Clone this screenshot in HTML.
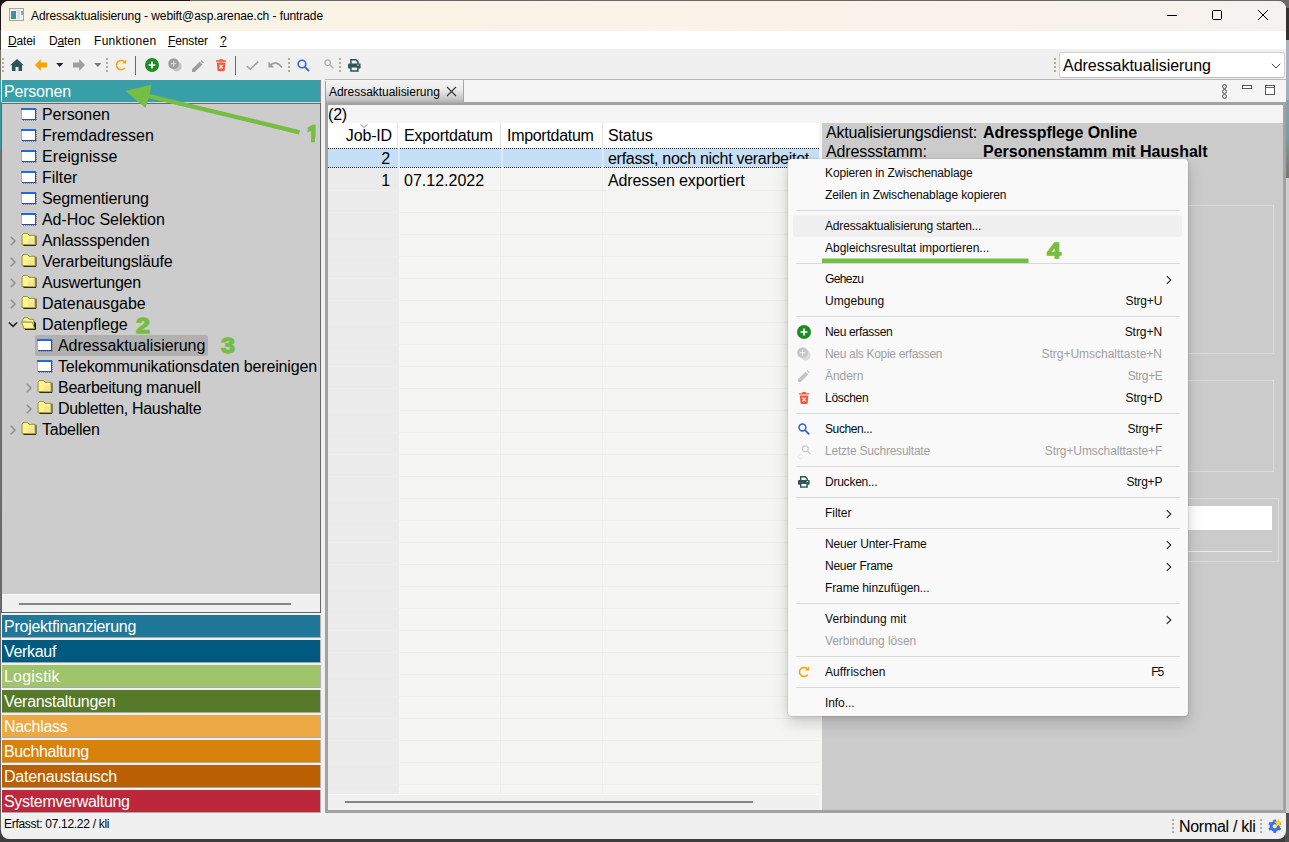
<!DOCTYPE html>
<html lang="de"><head><meta charset="utf-8"><title>Adressaktualisierung - webift@asp.arenae.ch - funtrade</title>
<style>
*{box-sizing:border-box;margin:0;padding:0}
html,body{width:1289px;height:842px;overflow:hidden}
body{background:#3d3d3d;font-family:"Liberation Sans",sans-serif;color:#000;position:relative}
.abs,.win *{position:absolute}
.win u{position:static}
.win{position:absolute;left:1px;top:1px;width:1285px;height:838px;background:#f0f0f0;border-radius:8px;overflow:hidden}
.t12{font-size:12px;letter-spacing:-0.12px;white-space:nowrap;line-height:16px}
.t16{font-size:16px;letter-spacing:-0.2px;white-space:nowrap;line-height:20px}
.tree .t16{left:0}
.row{left:0;width:318px;height:21px}
.ico{width:16px;height:13px}
.cat{left:1px;width:318px;height:22px;color:#fff;font-size:16px;letter-spacing:-0.2px;line-height:24px;padding-left:2px;white-space:nowrap;overflow:hidden}
.gap{left:1px;width:319px;height:1px;background:#a8a8a8}
.mi{left:37px;font-size:12px;letter-spacing:-0.05px;line-height:22px;height:22px;white-space:nowrap;color:#0a0a0a}
.mk{right:17px;font-size:12px;letter-spacing:-0.05px;line-height:22px;height:22px;white-space:nowrap;color:#0a0a0a;text-align:right}
.dis{color:#a0a0a0}
.sep{left:8px;width:384px;height:1px;background:#d9d9d9}
.chev{right:16px;width:6px;height:10px}
.hl{left:2px;width:1px;background:#e4e4e4}
.gl{height:1px;background:#e9e9e9;left:0}
.grip{width:2px;height:14px;background:repeating-linear-gradient(to bottom,#b3ab99 0,#b3ab99 2px,transparent 2px,transparent 4px)}
.green{color:#76bd43;font-weight:700;font-size:22.8px;line-height:24px;letter-spacing:0;-webkit-text-stroke:1.3px #76bd43;transform:scale(1.1,1);transform-origin:0 22px}
</style></head><body>

<div class="abs" style="left:0;top:0;width:190px;height:30px;background:#1c1220"></div>
<div class="abs" style="left:190px;top:0;width:1099px;height:12px;background:#686868"></div>
<div class="abs" style="left:1285px;top:8px;width:4px;height:32px;background:#303030"></div>
<div class="abs" style="left:1285px;top:40px;width:4px;height:60px;background:linear-gradient(#a9b4ba,#9fb0b4)"></div>
<div class="abs" style="left:1285px;top:100px;width:4px;height:78px;background:linear-gradient(#85a3a4,#7c9a9a 50%,#77776f)"></div>
<div class="abs" style="left:1285px;top:178px;width:4px;height:635px;background:#cdcdcd"></div>
<div class="abs" style="left:1285px;top:813px;width:4px;height:29px;background:#505050"></div>
<div class="abs" style="left:0;top:50px;width:3px;height:780px;background:linear-gradient(#77736a 0,#77736a 30px,#3a98a2 30px,#3a98a2 100px,#777 100px,#666 100%)"></div>
<div class="win">
<div style="left:0;top:0;width:1285px;height:30px;background:linear-gradient(90deg,#faf4e4,#f9f3e8 50%,#f8f2ec 88%,#f4f2f0)"></div>
<svg style="left:8px;top:7px" width="16" height="14" viewBox="0 0 16 14"><defs><linearGradient id="ig" x1="0" y1="0" x2="0" y2="1"><stop offset="0" stop-color="#4f86c4"/><stop offset="1" stop-color="#3f9a60"/></linearGradient></defs><rect x="0.5" y="0.5" width="14" height="12" fill="#f1f2f6" stroke="#a6a6a6"/><rect x="2" y="3" width="5" height="8" fill="url(#ig)"/><rect x="8" y="2" width="3" height="9" fill="#dedede"/><rect x="12" y="3" width="2" height="4" fill="#6aa0c8"/><rect x="12" y="5" width="2" height="2" fill="#7fc08a"/></svg>
<div class="t12" style="left:30px;top:7px;letter-spacing:-0.08px">Adressaktualisierung - webift@asp.arenae.ch - funtrade</div>
<svg style="left:1165px;top:7.5px" width="110" height="12" viewBox="0 0 110 12" fill="none" stroke="#000" stroke-width="1"><path d="M1 6.5h10"/><rect x="46.5" y="1.5" width="9" height="9" rx="1"/><path d="M92 1l10 10M102 1l-10 10"/></svg>
<div style="left:0;top:30px;width:1285px;height:18px;background:#fff"></div>
<div class="t12" style="left:7px;top:32px"><u>D</u>atei</div>
<div class="t12" style="left:48px;top:32px">D<u>a</u>ten</div>
<div class="t12" style="left:93px;top:32px"><span style="position:static;letter-spacing:0.3px">Funktionen</span></div>
<div class="t12" style="left:167px;top:32px"><u>F</u>enster</div>
<div class="t12" style="left:219px;top:32px"><u>?</u></div>
<div class="grip" style="left:1px;top:57px"></div>
<div class="grip" style="left:105px;top:57px"></div>
<div class="grip" style="left:287px;top:57px"></div>
<div class="grip" style="left:338px;top:57px"></div>
<div class="grip" style="left:1053px;top:57px"></div>
<svg style="left:9px;top:58px" width="14" height="12" viewBox="0 0 14 12"><path d="M7 0L0.2 6.2h1.7V12h3.6V8h3V12h3.6V6.2h1.7z" fill="#2f5656"/></svg>
<svg style="left:34px;top:58px" width="12" height="12" viewBox="0 0 12 12"><path d="M0 6L5.8 0v3.4H12v5H5.8V12z" fill="#ffa200"/></svg>
<svg style="left:55px;top:62px" width="8" height="4" viewBox="0 0 8 4"><path d="M0.2 0h7.2L3.8 4z" fill="#222"/></svg>
<svg style="left:72px;top:58px" width="12" height="12" viewBox="0 0 12 12"><path d="M12 6L6.2 0v3.4H0v5h6.2V12z" fill="#9e9e9e"/></svg>
<svg style="left:93px;top:62px" width="8" height="4" viewBox="0 0 8 4"><path d="M0.2 0h7.2L3.8 4z" fill="#7a7a7a"/></svg>
<svg style="left:114px;top:58px" width="12" height="12" viewBox="0 0 13 13" fill="none"><path d="M10.6 9.6A5 5 0 1 1 10.9 4" stroke="#ffa000" stroke-width="1.7"/><path d="M12.2 0.6V5H7.8z" fill="#ffa000"/></svg>
<div style="left:134px;top:55px;width:1px;height:19px;background:#6a6a6a"></div>
<svg style="left:144px;top:57px" width="14" height="14" viewBox="0 0 14 14"><circle cx="7" cy="7" r="7" fill="#1f8b24"/><path d="M7 3.6v6.8M3.6 7h6.8" stroke="#fff" stroke-width="1.7"/></svg>
<svg style="left:167px;top:57px" width="14" height="14" viewBox="0 0 14 14"><circle cx="8.6" cy="8.4" r="5" fill="#c4c4c4"/><circle cx="5.6" cy="5.6" r="5.4" fill="#9e9e9e"/><path d="M5.6 2.8v5.6M2.8 5.6h5.6" stroke="#d8d8d8" stroke-width="1.2"/></svg>
<svg style="left:191px;top:58.5px" width="12" height="12" viewBox="0 0 13 13"><path d="M0 13v-3L8.2 1.8l3 3L3 13zM9.2 0.8l1-1 3 3-1 1z" fill="#9e9e9e"/></svg>
<svg style="left:215px;top:58px" width="10.2" height="12.5" viewBox="0 0 11 13"><path d="M0 1.2h3.2L3.8 0h3.4l0.6 1.2H11v1.5H0zM0.9 3.6h9.2L9.4 11.6Q9.3 13 8 13H3Q1.7 13 1.6 11.6z" fill="#f9573a"/><path d="M3.7 6l3.6 4M7.3 6l-3.6 4" stroke="#fff" stroke-width="1.3"/></svg>
<div style="left:234px;top:55px;width:1px;height:19px;background:#6a6a6a"></div>
<svg style="left:245px;top:60px" width="13" height="9" viewBox="0 0 13 9" fill="none"><path d="M0.8 5L4.4 8.2 12.2 0.6" stroke="#9e9e9e" stroke-width="1.5"/></svg>
<svg style="left:267px;top:60px" width="15" height="8" viewBox="0 0 15 8" fill="none"><path d="M2.2 4.2Q8.5 -1 14 6.6" stroke="#9e9e9e" stroke-width="1.7"/><path d="M0.4 0.6v5.8h5.8z" fill="#9e9e9e"/></svg>
<svg style="left:296px;top:58px" width="13" height="13" viewBox="0 0 13 13" fill="none"><circle cx="5" cy="5" r="3.8" stroke="#2f62dd" stroke-width="1.6"/><path d="M7.8 7.8L12 12" stroke="#2f62dd" stroke-width="1.8"/></svg>
<svg style="left:323px;top:58px" width="10" height="10" viewBox="0 0 10 10" fill="none"><circle cx="3.7" cy="3.7" r="2.8" stroke="#a8a8a8" stroke-width="1.2"/><path d="M5.8 5.8L9.4 9.4" stroke="#a8a8a8" stroke-width="1.3"/></svg>
<svg style="left:347px;top:58px" width="13" height="13" viewBox="0 0 13 13"><path d="M2.9 5V0.8h5L10 2.9V5" fill="none" stroke="#2f5656" stroke-width="1.5"/><rect x="0" y="4.4" width="12.6" height="5" rx="1" fill="#2f5656"/><rect x="2.9" y="7.8" width="7" height="4.2" fill="#f0f0f0" stroke="#2f5656" stroke-width="1.5"/><rect x="9.3" y="5.6" width="1.6" height="1" fill="#f0f0f0"/></svg>
<div style="left:1058px;top:51px;width:226px;height:26px;background:#fff;border:1px solid #d0d0d0;border-bottom-color:#bdbdbd;border-radius:3px"></div>
<div class="t16" style="left:1062px;top:55px;letter-spacing:-0.03px">Adressaktualisierung</div>
<svg style="left:1270px;top:62px" width="10" height="6" viewBox="0 0 10 6" fill="none"><path d="M0.8 0.8L5 5 9.2 0.8" stroke="#444" stroke-width="1"/></svg>
<div style="left:1px;top:79px;width:319px;height:22px;background:#389fa9"></div>
<div style="left:319px;top:79px;width:1px;height:24px;background:#8a8a8a"></div>
<div class="t16" style="left:3px;top:81px;color:#fff;letter-spacing:-0.2px">Personen</div>
<div class="tree" style="left:0;top:101px;width:320px;height:511px;background:#cccccc;border:1px solid #646464;border-top:1px solid #d8d8d8"></div>
<div style="left:0;top:102px;width:320px;height:1px;background:#6a6a6a"></div>
<svg class="ico" style="left:20px;top:107px" width="16" height="13" viewBox="0 0 16 13"><rect x="0" y="0" width="15" height="12" fill="#fff"/><rect x="0" y="0" width="15" height="2" fill="#1e6be0"/><rect x="0" y="2" width="1" height="10" fill="#8ab4f0"/><rect x="14" y="1" width="1" height="11" fill="#2b4fa8"/><rect x="1" y="11" width="14" height="1" fill="#2b4fa8"/><path d="M15.5 1v11.5H1" fill="none" stroke="#7d7da0" stroke-width="1" stroke-dasharray="1 1"/></svg>
<div class="t16" style="left:41px;top:104px;letter-spacing:-0.088px">Personen</div>
<svg class="ico" style="left:20px;top:128px" width="16" height="13" viewBox="0 0 16 13"><rect x="0" y="0" width="15" height="12" fill="#fff"/><rect x="0" y="0" width="15" height="2" fill="#1e6be0"/><rect x="0" y="2" width="1" height="10" fill="#8ab4f0"/><rect x="14" y="1" width="1" height="11" fill="#2b4fa8"/><rect x="1" y="11" width="14" height="1" fill="#2b4fa8"/><path d="M15.5 1v11.5H1" fill="none" stroke="#7d7da0" stroke-width="1" stroke-dasharray="1 1"/></svg>
<div class="t16" style="left:41px;top:125px;letter-spacing:-0.019px">Fremdadressen</div>
<svg class="ico" style="left:20px;top:149px" width="16" height="13" viewBox="0 0 16 13"><rect x="0" y="0" width="15" height="12" fill="#fff"/><rect x="0" y="0" width="15" height="2" fill="#1e6be0"/><rect x="0" y="2" width="1" height="10" fill="#8ab4f0"/><rect x="14" y="1" width="1" height="11" fill="#2b4fa8"/><rect x="1" y="11" width="14" height="1" fill="#2b4fa8"/><path d="M15.5 1v11.5H1" fill="none" stroke="#7d7da0" stroke-width="1" stroke-dasharray="1 1"/></svg>
<div class="t16" style="left:41px;top:146px;letter-spacing:0.08px">Ereignisse</div>
<svg class="ico" style="left:20px;top:170px" width="16" height="13" viewBox="0 0 16 13"><rect x="0" y="0" width="15" height="12" fill="#fff"/><rect x="0" y="0" width="15" height="2" fill="#1e6be0"/><rect x="0" y="2" width="1" height="10" fill="#8ab4f0"/><rect x="14" y="1" width="1" height="11" fill="#2b4fa8"/><rect x="1" y="11" width="14" height="1" fill="#2b4fa8"/><path d="M15.5 1v11.5H1" fill="none" stroke="#7d7da0" stroke-width="1" stroke-dasharray="1 1"/></svg>
<div class="t16" style="left:41px;top:167px;letter-spacing:-0.044px">Filter</div>
<svg class="ico" style="left:20px;top:191px" width="16" height="13" viewBox="0 0 16 13"><rect x="0" y="0" width="15" height="12" fill="#fff"/><rect x="0" y="0" width="15" height="2" fill="#1e6be0"/><rect x="0" y="2" width="1" height="10" fill="#8ab4f0"/><rect x="14" y="1" width="1" height="11" fill="#2b4fa8"/><rect x="1" y="11" width="14" height="1" fill="#2b4fa8"/><path d="M15.5 1v11.5H1" fill="none" stroke="#7d7da0" stroke-width="1" stroke-dasharray="1 1"/></svg>
<div class="t16" style="left:41px;top:188px;letter-spacing:-0.14px">Segmentierung</div>
<svg class="ico" style="left:20px;top:212px" width="16" height="13" viewBox="0 0 16 13"><rect x="0" y="0" width="15" height="12" fill="#fff"/><rect x="0" y="0" width="15" height="2" fill="#1e6be0"/><rect x="0" y="2" width="1" height="10" fill="#8ab4f0"/><rect x="14" y="1" width="1" height="11" fill="#2b4fa8"/><rect x="1" y="11" width="14" height="1" fill="#2b4fa8"/><path d="M15.5 1v11.5H1" fill="none" stroke="#7d7da0" stroke-width="1" stroke-dasharray="1 1"/></svg>
<div class="t16" style="left:41px;top:209px;letter-spacing:-0.052px">Ad-Hoc Selektion</div>
<svg style="left:9px;top:235px" width="6" height="10" viewBox="0 0 6 10" fill="none"><path d="M0.8 0.7L5 5 0.8 9.3" stroke="#8e8e8e" stroke-width="1.5"/></svg>
<svg class="ico" style="left:20px;top:232px" width="16" height="14" viewBox="0 0 16 14"><path d="M15.5 3v10.5H2" fill="none" stroke="#111" stroke-width="1"/><path d="M0.5 12.5V2.5L2 0.5h4.5L8 2.5h6.5v10z" fill="#fdf390" stroke="#8e8e1e" stroke-width="1"/><path d="M8 6h6v6H6z" fill="#f6dc8e" opacity=".7"/></svg>
<div class="t16" style="left:41px;top:230px;letter-spacing:-0.148px">Anlassspenden</div>
<svg style="left:9px;top:256px" width="6" height="10" viewBox="0 0 6 10" fill="none"><path d="M0.8 0.7L5 5 0.8 9.3" stroke="#8e8e8e" stroke-width="1.5"/></svg>
<svg class="ico" style="left:20px;top:253px" width="16" height="14" viewBox="0 0 16 14"><path d="M15.5 3v10.5H2" fill="none" stroke="#111" stroke-width="1"/><path d="M0.5 12.5V2.5L2 0.5h4.5L8 2.5h6.5v10z" fill="#fdf390" stroke="#8e8e1e" stroke-width="1"/><path d="M8 6h6v6H6z" fill="#f6dc8e" opacity=".7"/></svg>
<div class="t16" style="left:41px;top:251px;letter-spacing:-0.163px">Verarbeitungsläufe</div>
<svg style="left:9px;top:277px" width="6" height="10" viewBox="0 0 6 10" fill="none"><path d="M0.8 0.7L5 5 0.8 9.3" stroke="#8e8e8e" stroke-width="1.5"/></svg>
<svg class="ico" style="left:20px;top:274px" width="16" height="14" viewBox="0 0 16 14"><path d="M15.5 3v10.5H2" fill="none" stroke="#111" stroke-width="1"/><path d="M0.5 12.5V2.5L2 0.5h4.5L8 2.5h6.5v10z" fill="#fdf390" stroke="#8e8e1e" stroke-width="1"/><path d="M8 6h6v6H6z" fill="#f6dc8e" opacity=".7"/></svg>
<div class="t16" style="left:41px;top:272px;letter-spacing:-0.291px">Auswertungen</div>
<svg style="left:9px;top:298px" width="6" height="10" viewBox="0 0 6 10" fill="none"><path d="M0.8 0.7L5 5 0.8 9.3" stroke="#8e8e8e" stroke-width="1.5"/></svg>
<svg class="ico" style="left:20px;top:295px" width="16" height="14" viewBox="0 0 16 14"><path d="M15.5 3v10.5H2" fill="none" stroke="#111" stroke-width="1"/><path d="M0.5 12.5V2.5L2 0.5h4.5L8 2.5h6.5v10z" fill="#fdf390" stroke="#8e8e1e" stroke-width="1"/><path d="M8 6h6v6H6z" fill="#f6dc8e" opacity=".7"/></svg>
<div class="t16" style="left:41px;top:293px;letter-spacing:-0.041px">Datenausgabe</div>
<svg style="left:7px;top:321px" width="10" height="6" viewBox="0 0 10 6" fill="none"><path d="M0.9 0.5L5 4.4 9.1 0.5" stroke="#222" stroke-width="1.5"/></svg>
<svg class="ico" style="left:20px;top:316px" width="17" height="14" viewBox="0 0 17 14"><path d="M1.5 3.5L3 0.8h4.5L9 2.5h4.5v3" fill="#fdf390" stroke="#8e8e1e"/><path d="M14.5 5v8M15.5 6v7.5H4" fill="none" stroke="#111" stroke-width="1"/><path d="M0.5 5.5h11.5l2.5 7H3z" fill="#fdf390" stroke="#8e8e1e" stroke-width="1"/><path d="M1.5 3.5L0.5 5.5" stroke="#8e8e1e"/></svg>
<div class="t16" style="left:41px;top:314px;letter-spacing:-0.054px">Datenpflege</div>
<div style="left:34px;top:334px;width:173px;height:21px;background:#b0b0b0;border-radius:2px"></div>
<svg class="ico" style="left:36px;top:338px" width="16" height="13" viewBox="0 0 16 13"><rect x="0" y="0" width="15" height="12" fill="#fff"/><rect x="0" y="0" width="15" height="2" fill="#1e6be0"/><rect x="0" y="2" width="1" height="10" fill="#8ab4f0"/><rect x="14" y="1" width="1" height="11" fill="#2b4fa8"/><rect x="1" y="11" width="14" height="1" fill="#2b4fa8"/><path d="M15.5 1v11.5H1" fill="none" stroke="#7d7da0" stroke-width="1" stroke-dasharray="1 1"/></svg>
<div class="t16" style="left:57px;top:335px;letter-spacing:-0.062px">Adressaktualisierung</div>
<svg class="ico" style="left:36px;top:359px" width="16" height="13" viewBox="0 0 16 13"><rect x="0" y="0" width="15" height="12" fill="#fff"/><rect x="0" y="0" width="15" height="2" fill="#1e6be0"/><rect x="0" y="2" width="1" height="10" fill="#8ab4f0"/><rect x="14" y="1" width="1" height="11" fill="#2b4fa8"/><rect x="1" y="11" width="14" height="1" fill="#2b4fa8"/><path d="M15.5 1v11.5H1" fill="none" stroke="#7d7da0" stroke-width="1" stroke-dasharray="1 1"/></svg>
<div class="t16" style="left:57px;top:356px;letter-spacing:-0.152px">Telekommunikationsdaten bereinigen</div>
<svg style="left:25px;top:382px" width="6" height="10" viewBox="0 0 6 10" fill="none"><path d="M0.8 0.7L5 5 0.8 9.3" stroke="#8e8e8e" stroke-width="1.5"/></svg>
<svg class="ico" style="left:36px;top:379px" width="16" height="14" viewBox="0 0 16 14"><path d="M15.5 3v10.5H2" fill="none" stroke="#111" stroke-width="1"/><path d="M0.5 12.5V2.5L2 0.5h4.5L8 2.5h6.5v10z" fill="#fdf390" stroke="#8e8e1e" stroke-width="1"/><path d="M8 6h6v6H6z" fill="#f6dc8e" opacity=".7"/></svg>
<div class="t16" style="left:57px;top:377px;letter-spacing:-0.225px">Bearbeitung manuell</div>
<svg style="left:25px;top:403px" width="6" height="10" viewBox="0 0 6 10" fill="none"><path d="M0.8 0.7L5 5 0.8 9.3" stroke="#8e8e8e" stroke-width="1.5"/></svg>
<svg class="ico" style="left:36px;top:400px" width="16" height="14" viewBox="0 0 16 14"><path d="M15.5 3v10.5H2" fill="none" stroke="#111" stroke-width="1"/><path d="M0.5 12.5V2.5L2 0.5h4.5L8 2.5h6.5v10z" fill="#fdf390" stroke="#8e8e1e" stroke-width="1"/><path d="M8 6h6v6H6z" fill="#f6dc8e" opacity=".7"/></svg>
<div class="t16" style="left:57px;top:398px;letter-spacing:-0.307px">Dubletten, Haushalte</div>
<svg style="left:9px;top:424px" width="6" height="10" viewBox="0 0 6 10" fill="none"><path d="M0.8 0.7L5 5 0.8 9.3" stroke="#8e8e8e" stroke-width="1.5"/></svg>
<svg class="ico" style="left:20px;top:421px" width="16" height="14" viewBox="0 0 16 14"><path d="M15.5 3v10.5H2" fill="none" stroke="#111" stroke-width="1"/><path d="M0.5 12.5V2.5L2 0.5h4.5L8 2.5h6.5v10z" fill="#fdf390" stroke="#8e8e1e" stroke-width="1"/><path d="M8 6h6v6H6z" fill="#f6dc8e" opacity=".7"/></svg>
<div class="t16" style="left:41px;top:419px;letter-spacing:-0.251px">Tabellen</div>
<div style="left:1px;top:593px;width:318px;height:18px;background:#f0f0f0;border-top:1px solid #fbfbfb"></div>
<div style="left:18px;top:602px;width:272px;height:2px;background:#858585"></div>
<div class="cat" style="top:614px;background:#1f789a;letter-spacing:-0.257px">Projektfinanzierung</div>
<div class="gap" style="top:636px"></div>
<div style="left:319px;top:614px;width:1px;height:23px;background:#b4b4b4"></div>
<div class="cat" style="top:639px;background:#00597f;letter-spacing:-0.31px">Verkauf</div>
<div class="gap" style="top:661px"></div>
<div style="left:319px;top:639px;width:1px;height:23px;background:#b4b4b4"></div>
<div class="cat" style="top:664px;background:#9fc46b;letter-spacing:0.181px">Logistik</div>
<div class="gap" style="top:686px"></div>
<div style="left:319px;top:664px;width:1px;height:23px;background:#b4b4b4"></div>
<div class="cat" style="top:689px;background:#567a2a;letter-spacing:-0.291px">Veranstaltungen</div>
<div class="gap" style="top:711px"></div>
<div style="left:319px;top:689px;width:1px;height:23px;background:#b4b4b4"></div>
<div class="cat" style="top:714px;background:#eba843;letter-spacing:-0.302px">Nachlass</div>
<div class="gap" style="top:736px"></div>
<div style="left:319px;top:714px;width:1px;height:23px;background:#b4b4b4"></div>
<div class="cat" style="top:739px;background:#d8820e;letter-spacing:-0.37px">Buchhaltung</div>
<div class="gap" style="top:761px"></div>
<div style="left:319px;top:739px;width:1px;height:23px;background:#b4b4b4"></div>
<div class="cat" style="top:764px;background:#ba5f02;letter-spacing:-0.196px">Datenaustausch</div>
<div class="gap" style="top:786px"></div>
<div style="left:319px;top:764px;width:1px;height:23px;background:#b4b4b4"></div>
<div class="cat" style="top:789px;background:#bd273b;letter-spacing:-0.314px">Systemverwaltung</div>
<div class="gap" style="top:811px"></div>
<div style="left:319px;top:789px;width:1px;height:23px;background:#b4b4b4"></div>
<div class="t12" style="left:3px;top:815px;letter-spacing:-0.3px">Erfasst: 07.12.22 / kli</div>
<div class="grip" style="left:1171px;top:818px"></div>
<div class="t16" style="left:1178px;top:816px;letter-spacing:-0.3px">Normal / kli</div>
<div class="grip" style="left:1259px;top:818px"></div>
<svg style="left:1267px;top:818px" width="16" height="15" viewBox="0 0 16 15"><g transform="translate(6.8 7.3) scale(0.95)"><circle r="4" fill="none" stroke="#3f6fe0" stroke-width="3"/><g fill="#3f6fe0"><rect x="-1.5" y="-7" width="3" height="14"/><rect x="-1.5" y="-7" width="3" height="14" transform="rotate(60)"/><rect x="-1.5" y="-7" width="3" height="14" transform="rotate(120)"/></g><circle r="2.2" fill="#f0f0f0"/></g><path d="M10.30 -0.50L11.45 2.62L14.77 2.75L12.15 4.80L13.06 8.00L10.30 6.15L7.54 8.00L8.45 4.80L5.83 2.75L9.15 2.62z" fill="#ffd61a"/></svg>
<div style="left:324px;top:78px;width:961px;height:734px;background:#a2a2a2;border-radius:4px 0 0 0"></div>
<div style="left:325px;top:79px;width:960px;height:22px;background:#f5f5f5"></div>
<div style="left:324px;top:78px;width:961px;height:1px;background:#b9b9b9"></div>
<div style="left:325px;top:79px;width:138px;height:23px;background:linear-gradient(#f4f4f4 0,#ececec 40%,#c4c4c4 85%,#a8a8a8 100%);border-right:1px solid #a6a6a6;border-radius:3px 0 0 0"></div>
<div class="t12" style="left:328px;top:83px;letter-spacing:-0.03px">Adressaktualisierung</div>
<svg style="left:445px;top:85px" width="11" height="11" viewBox="0 0 11 11"><path d="M1 1l9 9M10 1l-9 9" stroke="#333" stroke-width="1.1"/></svg>
<svg style="left:1220px;top:83px" width="7" height="15" viewBox="0 0 7 15" fill="none" stroke="#555" stroke-width="1"><circle cx="3.5" cy="2.6" r="2"/><circle cx="3.5" cy="7.5" r="2"/><circle cx="3.5" cy="12.4" r="2"/></svg>
<div style="left:1241px;top:84px;width:10px;height:4px;border:1px solid #555;background:#fff"></div>
<div style="left:1264px;top:84px;width:10px;height:10px;border:1px solid #555;background:#fff"></div><div style="left:1265px;top:86px;width:8px;height:1px;background:#666"></div>
<div style="left:327px;top:104px;width:955px;height:705px;background:#f5f5f5"></div>
<div class="t16" style="left:327px;top:104px">(2)</div>
<div style="left:327px;top:122px;width:491px;height:25px;background:#fff"></div>
<div style="left:327px;top:147px;width:71px;height:646px;background:#ebebeb"></div>
<div style="left:398px;top:147px;width:420px;height:646px;background:#f5f5f4"></div>
<div style="left:327px;top:148px;width:491px;height:18px;background:#c4dff6"></div>
<div style="left:327px;top:147px;width:491px;height:1px;background:repeating-linear-gradient(90deg,#222 0,#222 1px,#dfe9f3 1px,#dfe9f3 2px)"></div>
<div style="left:327px;top:166px;width:491px;height:1px;background:repeating-linear-gradient(90deg,#222 0,#222 1px,#dfe9f3 1px,#dfe9f3 2px)"></div>
<div style="left:396.5px;top:147px;width:2px;height:20px;background:#dde9f4"></div>
<div style="left:499.5px;top:147px;width:2px;height:20px;background:#dde9f4"></div>
<div style="left:601px;top:147px;width:2px;height:20px;background:#dde9f4"></div>
<div style="left:327px;top:189px;width:491px;height:1px;background:#eeeeed"></div>
<div style="left:327px;top:211px;width:491px;height:1px;background:#eeeeed"></div>
<div style="left:327px;top:233px;width:491px;height:1px;background:#eeeeed"></div>
<div style="left:327px;top:255px;width:491px;height:1px;background:#eeeeed"></div>
<div style="left:327px;top:277px;width:491px;height:1px;background:#eeeeed"></div>
<div style="left:327px;top:299px;width:491px;height:1px;background:#eeeeed"></div>
<div style="left:327px;top:321px;width:491px;height:1px;background:#eeeeed"></div>
<div style="left:327px;top:343px;width:491px;height:1px;background:#eeeeed"></div>
<div style="left:327px;top:365px;width:491px;height:1px;background:#eeeeed"></div>
<div style="left:327px;top:387px;width:491px;height:1px;background:#eeeeed"></div>
<div style="left:327px;top:409px;width:491px;height:1px;background:#eeeeed"></div>
<div style="left:327px;top:431px;width:491px;height:1px;background:#eeeeed"></div>
<div style="left:327px;top:453px;width:491px;height:1px;background:#eeeeed"></div>
<div style="left:327px;top:475px;width:491px;height:1px;background:#eeeeed"></div>
<div style="left:327px;top:497px;width:491px;height:1px;background:#eeeeed"></div>
<div style="left:327px;top:519px;width:491px;height:1px;background:#eeeeed"></div>
<div style="left:327px;top:541px;width:491px;height:1px;background:#eeeeed"></div>
<div style="left:327px;top:563px;width:491px;height:1px;background:#eeeeed"></div>
<div style="left:327px;top:585px;width:491px;height:1px;background:#eeeeed"></div>
<div style="left:327px;top:607px;width:491px;height:1px;background:#eeeeed"></div>
<div style="left:327px;top:629px;width:491px;height:1px;background:#eeeeed"></div>
<div style="left:327px;top:651px;width:491px;height:1px;background:#eeeeed"></div>
<div style="left:327px;top:673px;width:491px;height:1px;background:#eeeeed"></div>
<div style="left:327px;top:695px;width:491px;height:1px;background:#eeeeed"></div>
<div style="left:327px;top:717px;width:491px;height:1px;background:#eeeeed"></div>
<div style="left:327px;top:739px;width:491px;height:1px;background:#eeeeed"></div>
<div style="left:327px;top:761px;width:491px;height:1px;background:#eeeeed"></div>
<div style="left:327px;top:783px;width:491px;height:1px;background:#eeeeed"></div>
<div style="left:396px;top:122px;width:1px;height:25px;background:#e2e2e2"></div>
<div style="left:499px;top:122px;width:1px;height:25px;background:#e2e2e2"></div>
<div style="left:499px;top:167px;width:1px;height:626px;background:#eeeeed"></div>
<div style="left:600.5px;top:122px;width:1px;height:25px;background:#e2e2e2"></div>
<div style="left:600.5px;top:167px;width:1px;height:626px;background:#eeeeed"></div>
<svg style="left:359px;top:123px" width="8" height="4" viewBox="0 0 8 4" fill="none"><path d="M0.5 0.3L4 3.5 7.5 0.3" stroke="#777" stroke-width="0.9"/></svg>
<div class="t16" style="left:327px;width:64px;text-align:right;top:125px;letter-spacing:-0.154px">Job-ID</div>
<div class="t16" style="left:403px;top:125px;letter-spacing:-0.193px">Exportdatum</div>
<div class="t16" style="left:506px;top:125px;letter-spacing:-0.301px">Importdatum</div>
<div class="t16" style="left:607px;top:125px;letter-spacing:-0.143px">Status</div>
<div class="t16" style="left:327px;width:62px;text-align:right;top:148px">2</div>
<div class="t16" style="left:607px;top:148px;letter-spacing:-0.29px">erfasst, noch nicht verarbeitet</div>
<div class="t16" style="left:327px;width:62px;text-align:right;top:170px">1</div>
<div class="t16" style="left:403px;top:170px;letter-spacing:0.002px">07.12.2022</div>
<div class="t16" style="left:607px;top:170px;letter-spacing:-0.112px">Adressen exportiert</div>
<div style="left:327px;top:793px;width:491px;height:16px;background:#f0f0f0;border-top:1px solid #fcfcfc"></div>
<div style="left:344px;top:800px;width:408px;height:2px;background:#858585"></div>
<div style="left:821px;top:122px;width:461px;height:687px;background:#cbcbcb"></div>
<div class="t16" style="left:825px;top:122px;letter-spacing:-0.215px">Aktualisierungsdienst:</div>
<div class="t16" style="left:825px;top:141px;letter-spacing:-0.129px">Adressstamm:</div>
<div class="t16" style="left:982px;top:122px;font-weight:700;letter-spacing:-0.084px">Adresspflege Online</div>
<div class="t16" style="left:982px;top:141px;font-weight:700;letter-spacing:-0.017px">Personenstamm mit Haushalt</div>
<div style="left:830px;top:204px;width:443px;height:149px;border:1px solid #dcdcdc"></div>
<div style="left:830px;top:379px;width:443px;height:92px;border:1px solid #dcdcdc"></div>
<div style="left:830px;top:497px;width:448px;height:64px;border:1px solid #dcdcdc"></div>
<div style="left:900px;top:505px;width:371px;height:24px;background:#fff"></div>
<div style="left:900px;top:550px;width:371px;height:1px;background:#ececec"></div>
<div style="left:787px;top:158px;width:400px;height:557px;background:#f9f9f9;border-radius:4px;box-shadow:0 0 0 1px rgba(0,0,0,.06),0 7px 16px rgba(0,0,0,.17),0 2px 5px rgba(0,0,0,.08)">
<div class="mi" style="top:3px;letter-spacing:-0.122px">Kopieren in Zwischenablage</div>
<div class="mi" style="top:25px;letter-spacing:-0.102px">Zeilen in Zwischenablage kopieren</div>
<div class="sep" style="top:51px"></div>
<div style="left:5px;top:56px;width:389px;height:22px;background:#f0f0f0;border-radius:4px"></div>
<div class="mi" style="top:56px;letter-spacing:-0.168px">Adressaktualisierung starten...</div>
<div class="mi" style="top:78px;letter-spacing:-0.014px">Abgleichsresultat importieren...</div>
<div class="sep" style="top:104px"></div>
<div class="mi" style="top:109px;letter-spacing:-0.605px">Gehezu</div>
<svg class="chev" style="top:116px" width="6" height="9" viewBox="0 0 6 9" fill="none"><path d="M0.8 0.6L4.8 4.5 0.8 8.4" stroke="#222" stroke-width="1.1"/></svg>
<div class="mi" style="top:131px;letter-spacing:0.073px">Umgebung</div>
<div class="mk" style="top:131px;right:25.819px;letter-spacing:-0.181px">Strg+U</div>
<div class="sep" style="top:157px"></div>
<svg style="left:9px;top:166px" width="14" height="14" viewBox="0 0 14 14"><circle cx="7" cy="7" r="7" fill="#1f8b24"/><path d="M7 3.6v6.8M3.6 7h6.8" stroke="#fff" stroke-width="1.7"/></svg>
<div class="mi" style="top:162px;letter-spacing:-0.34px">Neu erfassen</div>
<div class="mk" style="top:162px;right:25.952px;letter-spacing:-0.048px">Strg+N</div>
<svg style="left:9px;top:188px" width="14" height="14" viewBox="0 0 14 14"><circle cx="8.6" cy="8.4" r="5" fill="#dcdcdc"/><circle cx="5.6" cy="5.6" r="5.4" fill="#c6c6c6"/><path d="M5.6 2.8v5.6M2.8 5.6h5.6" stroke="#ededed" stroke-width="1.2"/></svg>
<div class="mi dis" style="top:184px;letter-spacing:-0.313px">Neu als Kopie erfassen</div>
<div class="mk dis" style="top:184px;right:25.994px;letter-spacing:-0.006px">Strg+Umschalttaste+N</div>
<svg style="left:10px;top:210px;margin-top:1px" width="12" height="12" viewBox="0 0 13 13"><path d="M0 13v-3L8.2 1.8l3 3L3 13zM9.2 0.8l1-1 3 3-1 1z" fill="#c4c4c4"/></svg>
<div class="mi dis" style="top:206px;letter-spacing:-0.051px">Ändern</div>
<div class="mk dis" style="top:206px;right:25.611px;letter-spacing:-0.389px">Strg+E</div>
<svg style="left:11px;top:232px;margin-top:1px" width="10.2" height="12.2" viewBox="0 0 11 13"><path d="M0 1.2h3.2L3.8 0h3.4l0.6 1.2H11v1.5H0zM0.9 3.6h9.2L9.4 11.6Q9.3 13 8 13H3Q1.7 13 1.6 11.6z" fill="#f9573a"/><path d="M3.7 6l3.6 4M7.3 6l-3.6 4" stroke="#fff" stroke-width="1.3"/></svg>
<div class="mi" style="top:228px;letter-spacing:-0.296px">Löschen</div>
<div class="mk" style="top:228px;right:25.819px;letter-spacing:-0.181px">Strg+D</div>
<div class="sep" style="top:254px"></div>
<svg style="left:10px;top:263px;margin-top:1px" width="12" height="12" viewBox="0 0 13 13" fill="none"><circle cx="4.8" cy="4.8" r="3.7" stroke="#2f62dd" stroke-width="1.7"/><path d="M7.6 7.6L12.2 12.2" stroke="#2f62dd" stroke-width="1.9"/></svg>
<div class="mi" style="top:259px;letter-spacing:-0.4px">Suchen...</div>
<div class="mk" style="top:259px;right:25.723px;letter-spacing:-0.277px">Strg+F</div>
<svg style="left:9px;top:285px;overflow:visible" width="15" height="15" viewBox="0 0 15 15" fill="none"><circle cx="8.3" cy="4.8" r="2.9" stroke="#c9c9c9" stroke-width="1.1"/><path d="M10.4 7L13.6 10.1" stroke="#c9c9c9" stroke-width="1.2"/><path d="M5.4 11.2A2.2 2.2 0 1 0 5.6 13.2" stroke="#e0e0e0" stroke-width="1"/></svg>
<div class="mi dis" style="top:281px;letter-spacing:-0.225px">Letzte Suchresultate</div>
<div class="mk dis" style="top:281px;right:25.895px;letter-spacing:-0.105px">Strg+Umschalttaste+F</div>
<div class="sep" style="top:307px"></div>
<svg style="left:10px;top:316px;margin-top:1px" width="12" height="12" viewBox="0 0 13 13"><path d="M2.9 5V0.8h5L10 2.9V5" fill="none" stroke="#2f5656" stroke-width="1.5"/><rect x="0" y="4.4" width="12.6" height="5" rx="1" fill="#2f5656"/><rect x="2.9" y="7.8" width="7" height="4.2" fill="#f9f9f9" stroke="#2f5656" stroke-width="1.5"/><rect x="9.3" y="5.6" width="1.6" height="1" fill="#f9f9f9"/></svg>
<div class="mi" style="top:312px;letter-spacing:-0.239px">Drucken...</div>
<div class="mk" style="top:312px;right:25.795px;letter-spacing:-0.205px">Strg+P</div>
<div class="sep" style="top:338px"></div>
<div class="mi" style="top:343px;letter-spacing:-0.044px">Filter</div>
<svg class="chev" style="top:350px" width="6" height="9" viewBox="0 0 6 9" fill="none"><path d="M0.8 0.6L4.8 4.5 0.8 8.4" stroke="#222" stroke-width="1.1"/></svg>
<div class="sep" style="top:369px"></div>
<div class="mi" style="top:374px;letter-spacing:-0.143px">Neuer Unter-Frame</div>
<svg class="chev" style="top:381px" width="6" height="9" viewBox="0 0 6 9" fill="none"><path d="M0.8 0.6L4.8 4.5 0.8 8.4" stroke="#222" stroke-width="1.1"/></svg>
<div class="mi" style="top:396px;letter-spacing:-0.272px">Neuer Frame</div>
<svg class="chev" style="top:403px" width="6" height="9" viewBox="0 0 6 9" fill="none"><path d="M0.8 0.6L4.8 4.5 0.8 8.4" stroke="#222" stroke-width="1.1"/></svg>
<div class="mi" style="top:418px;letter-spacing:-0.118px">Frame hinzufügen...</div>
<div class="sep" style="top:444px"></div>
<div class="mi" style="top:449px;letter-spacing:0.103px">Verbindung mit</div>
<svg class="chev" style="top:456px" width="6" height="9" viewBox="0 0 6 9" fill="none"><path d="M0.8 0.6L4.8 4.5 0.8 8.4" stroke="#222" stroke-width="1.1"/></svg>
<div class="mi dis" style="top:471px;letter-spacing:-0.103px">Verbindung lösen</div>
<div class="sep" style="top:497px"></div>
<svg style="left:9.7px;top:506px;margin-top:1px" width="11.8" height="11.8" viewBox="0 0 13 13" fill="none"><path d="M10.6 9.6A5 5 0 1 1 10.9 4" stroke="#ffa000" stroke-width="1.6"/><path d="M12.2 0.6V5H7.8z" fill="#ffa000"/></svg>
<div class="mi" style="top:502px;letter-spacing:0.053px">Auffrischen</div>
<div class="mk" style="top:502px;right:24.892px;letter-spacing:-1.108px">F5</div>
<div class="sep" style="top:528px"></div>
<div class="mi" style="top:533px;letter-spacing:-0.076px">Info...</div>
</div>
<svg style="left:0;top:0" width="1285" height="838" viewBox="1 1 1285 838"><path d="M125.5 91L151.5 84.5 149.6 93.9 300 130.2 299 134.4 148.6 98.2 145.5 108z" fill="#76bd43"/><rect x="822" y="258.5" width="206.5" height="4.5" fill="#76bd43"/></svg>
<div class="green" style="left:305.7px;top:121px;font-weight:400;font-size:22px;-webkit-text-stroke:2.5px #76bd43;transform:scaleY(1.04);transform-origin:0 20px;clip-path:polygon(-2px -2px,14px -2px,14px 15.6px,8.3px 15.6px,8.3px 22px,4.3px 22px,4.3px 15.6px,-2px 15.6px)">1</div>
<div class="green" style="left:134.6px;top:312px">2</div>
<div class="green" style="left:220px;top:332px">3</div>
<div class="green" style="left:1046px;top:237px">4</div>
</div></body></html>
